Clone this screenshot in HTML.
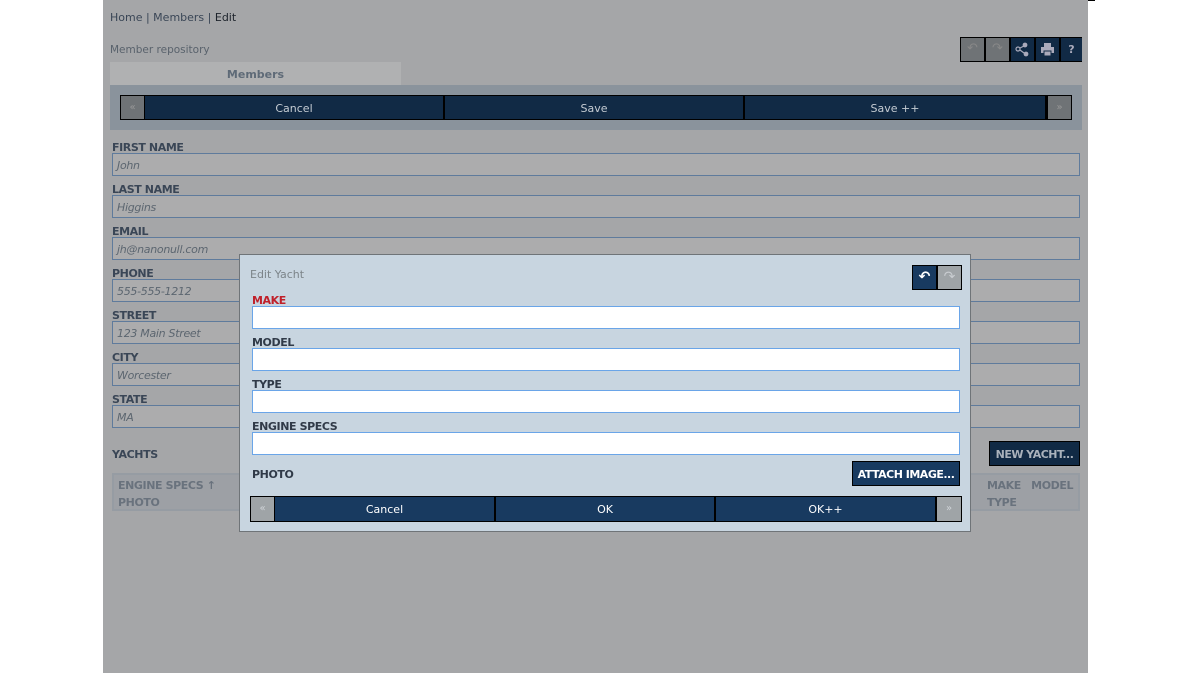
<!DOCTYPE html>
<html><head><meta charset="utf-8"><style>
*{box-sizing:border-box;margin:0;padding:0}
body{width:1198px;height:673px;background:#fff;position:relative;overflow:hidden;font-family:"DejaVu Sans","Liberation Sans",sans-serif;}
.a{position:absolute}
.pg{left:103px;top:0;width:985px;height:673px;background:#a5a6a8}
.lbl{font-size:11px;font-weight:bold;color:#3a4656;letter-spacing:-0.4px;margin-top:1px}
.inp{height:23px;border:1px solid #5f7b9c;background:#acacad;font-size:11px;font-style:italic;color:#5c6670;padding:5px 4px 0;letter-spacing:-0.3px}
.btn{background:#112a45;color:#c5ccd3;font-size:11px;text-align:center;line-height:25px;border-right:2px solid #000}
.dl{font-size:11px;font-weight:bold;color:#303a48;letter-spacing:-0.4px;margin-top:1px}
.di{height:23px;border:1px solid #6aa5e8;background:#fff}
.db{background:#183a60;color:#fff;font-size:11px;text-align:center;line-height:25px}
</style></head><body>
<div class="a" style="left:103px;top:0;width:992px;height:1px;background:#000"></div>
<div class="a pg"></div>
<div class="a" style="left:110px;top:11px;font-size:11px;color:#3a4656">Home | Members | <span style="color:#1d232b">Edit</span></div>
<div class="a" style="left:110px;top:44px;font-size:10.5px;color:#59626c">Member repository</div>
<div class="a" style="left:110px;top:62px;width:291px;height:23px;background:#b0b1b2;font-size:11px;font-weight:bold;color:#5e6a77;text-align:center;line-height:25px">Members</div>
<div class="a" style="left:960px;top:37px;width:122px;height:25px;background:#000"></div>
<div class="a" style="left:961px;top:38px;width:23px;height:23px;background:#6f7376;color:#888;font-size:13px;text-align:center;line-height:22px">↶</div>
<div class="a" style="left:986px;top:38px;width:23px;height:23px;background:#6f7376;color:#888;font-size:13px;text-align:center;line-height:22px">↷</div>
<div class="a" style="left:1011px;top:38px;width:23px;height:23px;background:#112a45">
<svg width="23" height="23"><circle cx="7" cy="11" r="2" fill="none" stroke="#aab" stroke-width="1.2"/><circle cx="14" cy="7" r="2.4" fill="#aab"/><circle cx="15" cy="16" r="2.4" fill="#aab"/><path d="M9 10L13 8M9 12L13 15" stroke="#aab" stroke-width="1.2"/></svg></div>
<div class="a" style="left:1036px;top:38px;width:23px;height:23px;background:#112a45">
<svg width="23" height="23"><rect x="8" y="5" width="7" height="4" fill="#aab"/><rect x="5" y="9" width="13" height="6" fill="#aab"/><rect x="8" y="13" width="7" height="5" fill="#aab" stroke="#112a45"/></svg></div>
<div class="a" style="left:1061px;top:38px;width:21px;height:23px;background:#112a45;color:#aab;font-size:11px;font-weight:bold;text-align:center;line-height:23px">?</div>
<div class="a" style="left:110px;top:85px;width:972px;height:45px;background:#8a939c"></div>
<div class="a" style="left:120px;top:95px;width:952px;height:25px;background:#000"></div>
<div class="a" style="left:121px;top:96px;width:23px;height:23px;background:#6f7376;color:#999;font-size:10px;text-align:center;line-height:23px">«</div>
<div class="a btn" style="left:145px;top:96px;width:300px;height:23px">Cancel</div>
<div class="a btn" style="left:445px;top:96px;width:300px;height:23px">Save</div>
<div class="a btn" style="left:745px;top:96px;width:302px;height:23px">Save ++</div>
<div class="a" style="left:1048px;top:96px;width:23px;height:23px;background:#6f7376;color:#999;font-size:10px;text-align:center;line-height:23px">»</div>
<div class="a lbl" style="left:112px;top:140px">FIRST NAME</div><div class="a inp" style="left:112px;top:153px;width:968px">John</div>
<div class="a lbl" style="left:112px;top:182px">LAST NAME</div><div class="a inp" style="left:112px;top:195px;width:968px">Higgins</div>
<div class="a lbl" style="left:112px;top:224px">EMAIL</div><div class="a inp" style="left:112px;top:237px;width:968px">jh@nanonull.com</div>
<div class="a lbl" style="left:112px;top:266px">PHONE</div><div class="a inp" style="left:112px;top:279px;width:968px">555-555-1212</div>
<div class="a lbl" style="left:112px;top:308px">STREET</div><div class="a inp" style="left:112px;top:321px;width:968px">123 Main Street</div>
<div class="a lbl" style="left:112px;top:350px">CITY</div><div class="a inp" style="left:112px;top:363px;width:968px">Worcester</div>
<div class="a lbl" style="left:112px;top:392px">STATE</div><div class="a inp" style="left:112px;top:405px;width:968px">MA</div>
<div class="a lbl" style="left:112px;top:447px">YACHTS</div>
<div class="a" style="left:989px;top:441px;width:91px;height:25px;background:#112a45;border:1px solid #000;color:#aab2bc;font-size:11px;font-weight:bold;text-align:center;line-height:25px;letter-spacing:-0.5px">NEW YACHT...</div>
<div class="a" style="left:112px;top:473px;width:968px;height:38px;border:2px solid #969ca3;background:#9da0a5"></div>
<div class="a lbl" style="left:118px;top:476px;color:#69727d;line-height:17px">ENGINE SPECS ↑<br>PHOTO</div>
<div class="a lbl" style="left:987px;top:476px;color:#69727d;line-height:17px">MAKE&nbsp;&nbsp; MODEL<br>TYPE</div>
<div class="a" style="left:239px;top:254px;width:732px;height:278px;background:#c8d5e0;border:1px solid #6f7478"></div>
<div class="a" style="left:250px;top:268px;font-size:11px;color:#7c8489">Edit Yacht</div>
<div class="a" style="left:912px;top:265px;width:50px;height:25px;background:#000"></div>
<div class="a" style="left:913px;top:266px;width:23px;height:23px;background:#183a60;color:#fff;font-size:14px;text-align:center;line-height:22px;font-weight:bold">↶</div>
<div class="a" style="left:938px;top:266px;width:23px;height:23px;background:#9fa4a7;color:#c8ccd0;font-size:14px;text-align:center;line-height:22px">↷</div>
<div class="a dl" style="left:252px;top:293px;color:#c0202a">MAKE</div><div class="a di" style="left:252px;top:306px;width:708px"></div>
<div class="a dl" style="left:252px;top:335px">MODEL</div><div class="a di" style="left:252px;top:348px;width:708px"></div>
<div class="a dl" style="left:252px;top:377px">TYPE</div><div class="a di" style="left:252px;top:390px;width:708px"></div>
<div class="a dl" style="left:252px;top:419px">ENGINE SPECS</div><div class="a di" style="left:252px;top:432px;width:708px"></div>
<div class="a dl" style="left:252px;top:467px">PHOTO</div>
<div class="a" style="left:852px;top:461px;width:108px;height:25px;background:#183a60;border:1px solid #000;color:#fff;font-size:11px;font-weight:bold;text-align:center;line-height:25px;letter-spacing:-0.5px">ATTACH IMAGE...</div>
<div class="a" style="left:250px;top:496px;width:712px;height:26px;background:#000"></div>
<div class="a" style="left:251px;top:497px;width:23px;height:24px;background:#9fa4a7;color:#d0d4d8;font-size:10px;text-align:center;line-height:24px">«</div>
<div class="a db" style="left:275px;top:497px;width:219px;height:24px">Cancel</div>
<div class="a db" style="left:496px;top:497px;width:218px;height:24px">OK</div>
<div class="a db" style="left:716px;top:497px;width:219px;height:24px">OK++</div>
<div class="a" style="left:937px;top:497px;width:24px;height:24px;background:#9fa4a7;color:#d0d4d8;font-size:10px;text-align:center;line-height:24px">»</div>
</body></html>
